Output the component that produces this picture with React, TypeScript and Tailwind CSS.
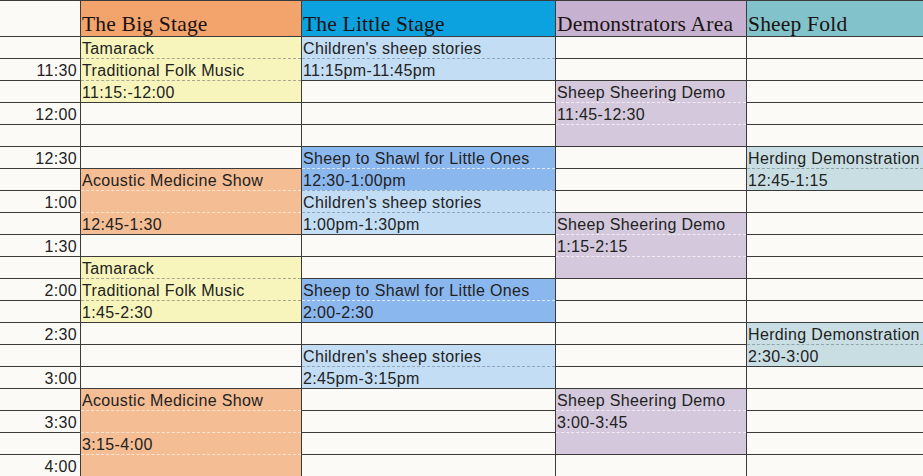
import React from 'react';

interface Block {
  rows: number;
  bg?: string;
  dash?: string;
  lines?: string[];
  joined?: boolean;
}

interface Column {
  title: string;
  width: string;
  headerBg: string;
  blocks: Block[];
}

const blank = (rows: number): Block => ({ rows });

const yellow = { bg: 'bg-[#f7f5bc]', dash: 'border-[#a9a78f]' };
const orange = { bg: 'bg-[#f4bd94]', dash: 'border-[#fbe6d6]' };
const paleBlue = { bg: 'bg-[#c2ddf4]', dash: 'border-[#8fa7bd]' };
const blue = { bg: 'bg-[#8bb7ef]', dash: 'border-[#dde9fb]' };
const lavender = { bg: 'bg-[#d3c8dc]', dash: 'border-[#f1ecf4]' };
const teal = { bg: 'bg-[#c8dee2]', dash: 'border-[#8ea6ab]' };

const columns: Column[] = [
  {
    title: 'The Big Stage',
    width: 'w-[221px]',
    headerBg: 'bg-[#f2a46c]',
    blocks: [
      { rows: 3, ...yellow, lines: ['Tamarack', 'Traditional Folk Music', '11:15:-12:00'] },
      blank(3),
      { rows: 3, ...orange, lines: ['Acoustic Medicine Show', '', '12:45-1:30'] },
      blank(1),
      { rows: 3, ...yellow, lines: ['Tamarack', 'Traditional Folk Music', '1:45-2:30'] },
      blank(3),
      { rows: 4, ...orange, lines: ['Acoustic Medicine Show', '', '3:15-4:00', ''] },
    ],
  },
  {
    title: 'The Little Stage',
    width: 'w-[254px]',
    headerBg: 'bg-[#0ca2df]',
    blocks: [
      { rows: 2, ...paleBlue, lines: ["Children's sheep stories", '11:15pm-11:45pm'] },
      blank(3),
      { rows: 2, ...blue, lines: ['Sheep to Shawl for Little Ones', '12:30-1:00pm'] },
      { rows: 2, ...paleBlue, joined: true, lines: ["Children's sheep stories", '1:00pm-1:30pm'] },
      blank(2),
      { rows: 2, ...blue, lines: ['Sheep to Shawl for Little Ones', '2:00-2:30'] },
      blank(1),
      { rows: 2, ...paleBlue, lines: ["Children's sheep stories", '2:45pm-3:15pm'] },
      blank(4),
    ],
  },
  {
    title: 'Demonstrators Area',
    width: 'w-[191px]',
    headerBg: 'bg-[#c6b2d0]',
    blocks: [
      blank(2),
      { rows: 3, ...lavender, lines: ['Sheep Sheering Demo', '11:45-12:30', ''] },
      blank(3),
      { rows: 3, ...lavender, lines: ['Sheep Sheering Demo', '1:15-2:15', ''] },
      blank(5),
      { rows: 3, ...lavender, lines: ['Sheep Sheering Demo', '3:00-3:45', ''] },
      blank(1),
    ],
  },
  {
    title: 'Sheep Fold',
    width: 'w-[177px]',
    headerBg: 'bg-[#82c2ca]',
    blocks: [
      blank(5),
      { rows: 2, ...teal, lines: ['Herding Demonstration', '12:45-1:15'] },
      blank(6),
      { rows: 2, ...teal, lines: ['Herding Demonstration', '2:30-3:00'] },
      blank(5),
    ],
  },
];

const times = ['', '11:30', '', '12:00', '', '12:30', '', '1:00', '', '1:30', '', '2:00', '', '2:30', '', '3:00', '', '3:30', '', '4:00'];

const cellText = 'text-[16px] leading-[21px] tracking-[0.35px] text-[#222222] whitespace-nowrap overflow-hidden';

const BlockView = ({ block }: { block: Block }) => {
  if (!block.bg) {
    return (
      <>
        {Array.from({ length: block.rows }).map((_, i) => (
          <div key={i} className="h-[22px] border-t border-[#3b3b3b]" />
        ))}
      </>
    );
  }
  return (
    <div className={block.bg}>
      {block.lines!.map((line, i) => (
        <div
          key={i}
          className={
            i === 0 && !block.joined
              ? `h-[22px] border-t border-[#3b3b3b] pl-[1px] pt-[1px] ${cellText}`
              : `h-[22px] border-t border-dashed ${block.dash} pl-[1px] pt-[1px] ${cellText}`
          }
        >
          {line}
        </div>
      ))}
    </div>
  );
};

const App = () => {
  return (
    <div className="w-[923px] h-[476px] overflow-hidden bg-[#fbfaf7] flex font-['Liberation_Sans',Arial,sans-serif]">
      <div className="w-[80px] shrink-0 flex flex-col">
        <div className="h-[36px] border-t border-[#3b3b3b]" />
        {times.map((t, i) => (
          <div key={i} className={`h-[22px] border-t border-[#3b3b3b] pr-[3px] pt-[1px] text-right ${cellText}`}>
            {t}
          </div>
        ))}
      </div>
      {columns.map(col => (
        <div key={col.title} className={`${col.width} shrink-0 flex flex-col border-l border-[#3b3b3b]`}>
          <div
            className={`h-[36px] border-t border-[#3b3b3b] ${col.headerBg} flex items-end pl-[1px] pb-[0px] font-['Liberation_Serif',serif] text-[21.5px] leading-[24px] tracking-[0.2px] text-[#1b1212] whitespace-nowrap overflow-hidden`}
          >
            {col.title}
          </div>
          {col.blocks.map((b, i) => (
            <BlockView key={i} block={b} />
          ))}
        </div>
      ))}
    </div>
  );
};

export default App;
